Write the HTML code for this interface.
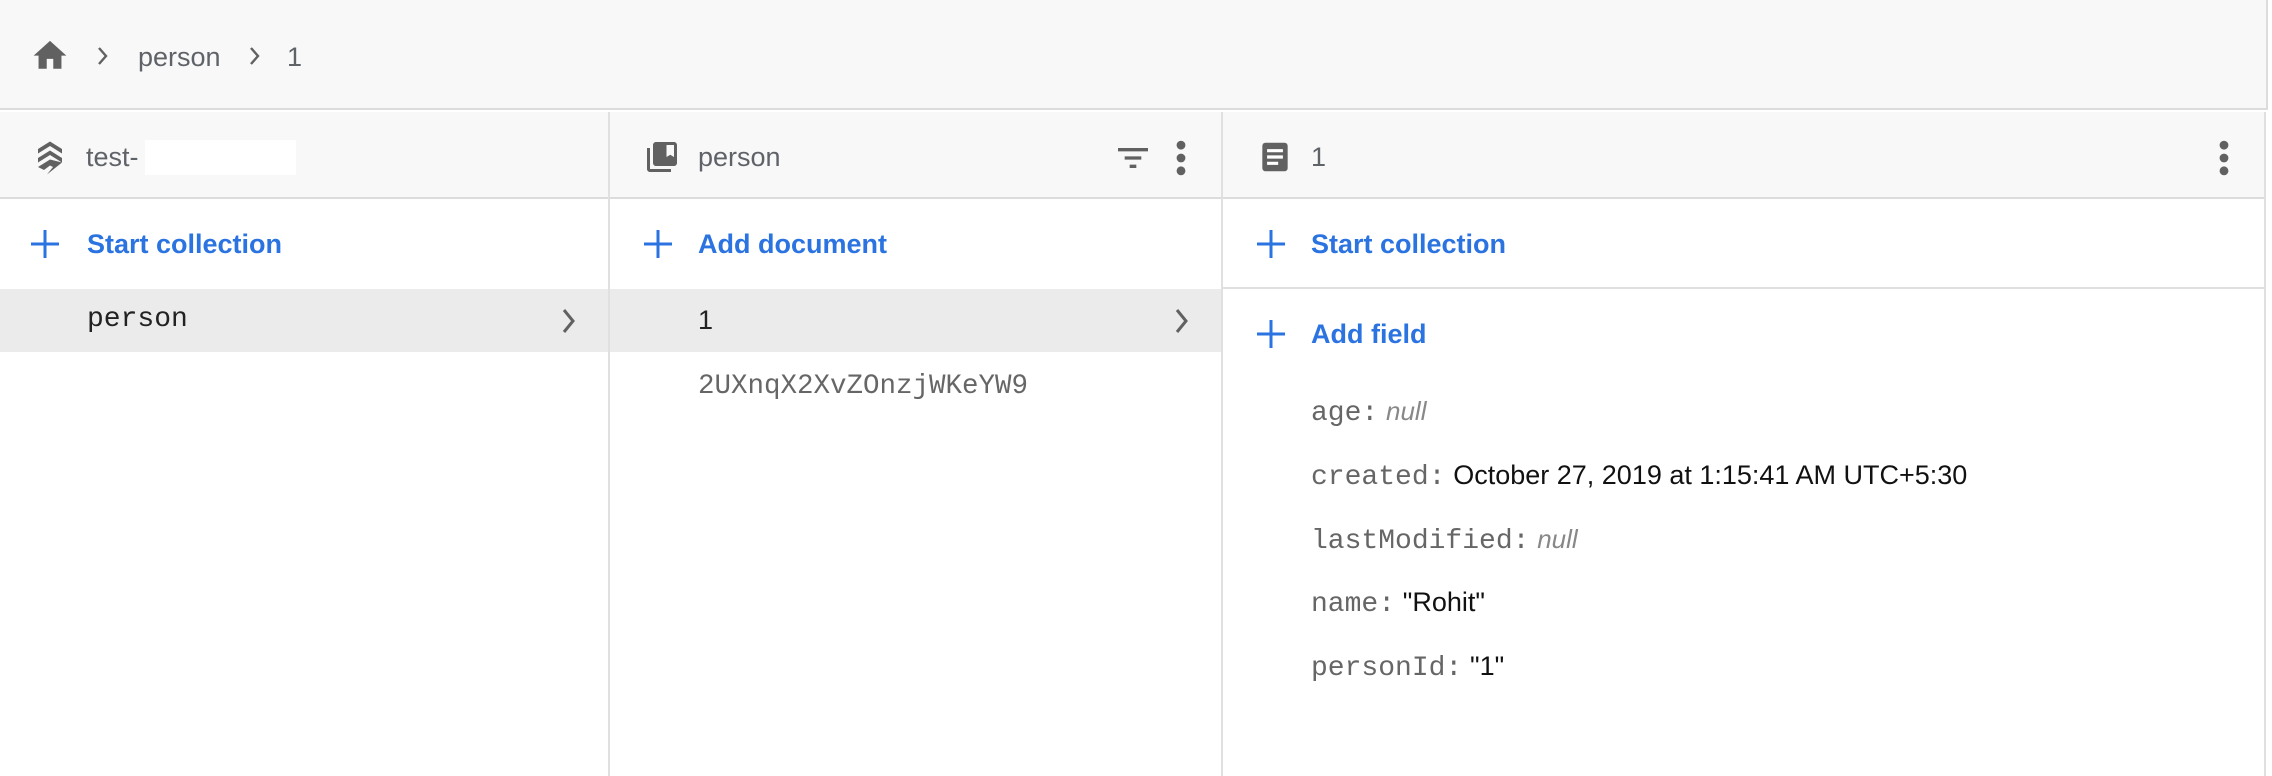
<!DOCTYPE html>
<html><head><meta charset="utf-8"><style>
*{margin:0;padding:0;box-sizing:border-box}
body{width:2272px;height:776px;background:#fff;font-family:"Liberation Sans",sans-serif;position:relative;overflow:hidden}
.a{position:absolute}
.t{position:absolute;white-space:nowrap;line-height:1}
.g{color:#5f6368}
.blue{color:#2a73e0;font-size:27px;font-weight:bold}
.mono{font-family:"Liberation Mono",monospace}
</style></head><body>
<div class="a" style="left:0;top:0;width:2268px;height:110px;background:#f8f8f8;border-bottom:2px solid #dcdcdc;border-right:2px solid #dcdcdc"></div>
<svg class="a" style="left:30px;top:36px" width="40" height="36" viewBox="0 0 24 22"><path d="M10 20v-6h4v6h5v-8h3L12 3 2 12h3v8z" fill="#616161"/></svg>
<svg class="a" style="left:96px;top:46px" width="14" height="20" viewBox="0 0 14 20"><path d="M3 2l7 8-7 8" fill="none" stroke="#616161" stroke-width="2.4"/></svg>
<div class="t g" style="left:138px;top:44px;font-size:27px">person</div>
<svg class="a" style="left:248px;top:46px" width="14" height="20" viewBox="0 0 14 20"><path d="M3 2l7 8-7 8" fill="none" stroke="#616161" stroke-width="2.4"/></svg>
<div class="t g" style="left:287px;top:44px;font-size:27px">1</div>
<div class="a" style="left:0;top:112px;width:2266px;height:87px;background:#f8f8f8;border-bottom:2px solid #dcdcdc"></div>
<div class="a" style="left:608px;top:112px;width:2px;height:664px;background:#e0e0e0"></div>
<div class="a" style="left:1221px;top:112px;width:2px;height:664px;background:#e0e0e0"></div>
<div class="a" style="left:2264px;top:112px;width:2px;height:664px;background:#e0e0e0"></div>
<svg class="a" style="left:32px;top:140px" width="36" height="36" viewBox="0 0 24 24"><path d="M12 1 4 6v3l8-5 8 5V6zM12 7l-8 5v3l8-5 8 5v-3zM12 13l-8 5 4 2 4-3 2 1-4 5 10-8z" fill="#616161"/></svg>
<div class="t g" style="left:86px;top:144px;font-size:27px">test-</div>
<div class="a" style="left:145px;top:140px;width:151px;height:35px;background:#fff"></div>
<svg class="a" style="left:644px;top:139px" width="36" height="36" viewBox="0 0 24 24"><path d="M4 6H2v14c0 1.1.9 2 2 2h14v-2H4V6zm16-4H8c-1.1 0-2 .9-2 2v12c0 1.1.9 2 2 2h12c1.1 0 2-.9 2-2V4c0-1.1-.9-2-2-2zm0 10-2.5-1.5L15 12V4h5v8z" fill="#616161"/></svg>
<div class="t g" style="left:698px;top:144px;font-size:27px">person</div>
<svg class="a" style="left:1113px;top:138px" width="40" height="40" viewBox="0 0 24 24"><path d="M3 6h18v2H3zM7 11h10v2H7zM10 16h4v2h-4z" fill="#616161"/></svg>
<svg class="a" style="left:1169px;top:136px" width="24" height="44" viewBox="0 0 12 24"><circle cx="6" cy="5" r="2.4" fill="#616161"/><circle cx="6" cy="12" r="2.4" fill="#616161"/><circle cx="6" cy="19" r="2.4" fill="#616161"/></svg>
<svg class="a" style="left:1256px;top:138px" width="38" height="38" viewBox="0 0 24 24"><rect x="4" y="3" width="16" height="18" rx="2" fill="#616161"/><path d="M7 7h10v2H7zM7 11h10v2H7zM7 15h7v2H7z" fill="#fff"/></svg>
<div class="t g" style="left:1311px;top:144px;font-size:27px">1</div>
<svg class="a" style="left:2212px;top:136px" width="24" height="44" viewBox="0 0 12 24"><circle cx="6" cy="5" r="2.4" fill="#616161"/><circle cx="6" cy="12" r="2.4" fill="#616161"/><circle cx="6" cy="19" r="2.4" fill="#616161"/></svg>
<svg class="a" style="left:30px;top:229px" width="30" height="30" viewBox="0 0 30 30"><path d="M13.5 1h3v28h-3zM1 13.5h28v3H1z" fill="#2a73e0"/></svg>
<div class="t blue" style="left:87px;top:231px">Start collection</div>
<svg class="a" style="left:643px;top:229px" width="30" height="30" viewBox="0 0 30 30"><path d="M13.5 1h3v28h-3zM1 13.5h28v3H1z" fill="#2a73e0"/></svg>
<div class="t blue" style="left:698px;top:231px">Add document</div>
<svg class="a" style="left:1256px;top:229px" width="30" height="30" viewBox="0 0 30 30"><path d="M13.5 1h3v28h-3zM1 13.5h28v3H1z" fill="#2a73e0"/></svg>
<div class="t blue" style="left:1311px;top:231px">Start collection</div>
<div class="a" style="left:1223px;top:287px;width:1041px;height:2px;background:#e0e0e0"></div>
<div class="a" style="left:0;top:289px;width:608px;height:63px;background:#ebebeb"></div>
<div class="a" style="left:610px;top:289px;width:611px;height:63px;background:#ebebeb"></div>
<div class="t mono" style="left:87px;top:306px;font-size:28px;color:#222">person</div>
<svg class="a" style="left:560px;top:307px" width="18" height="28" viewBox="0 0 18 28"><path d="M4 3l9 11-9 11" fill="none" stroke="#616161" stroke-width="3"/></svg>
<div class="t" style="left:698px;top:307px;font-size:27px;color:#222">1</div>
<svg class="a" style="left:1173px;top:307px" width="18" height="28" viewBox="0 0 18 28"><path d="M4 3l9 11-9 11" fill="none" stroke="#616161" stroke-width="3"/></svg>
<div class="t mono" style="left:698px;top:373px;font-size:27.5px;color:#666">2UXnqX2XvZOnzjWKeYW9</div>
<svg class="a" style="left:1256px;top:319px" width="30" height="30" viewBox="0 0 30 30"><path d="M13.5 1h3v28h-3zM1 13.5h28v3H1z" fill="#2a73e0"/></svg>
<div class="t blue" style="left:1311px;top:321px">Add field</div>
<div class="t" style="left:1311px;top:397px;font-size:28px"><span class="mono" style="color:#666">age:</span> <i style="color:#888;font-size:26px">null</i></div>
<div class="t" style="left:1311px;top:461px;font-size:28px"><span class="mono" style="color:#666">created:</span> <span style="color:#111;font-size:27px">October 27, 2019 at 1:15:41 AM UTC+5:30</span></div>
<div class="t" style="left:1311px;top:525px;font-size:28px"><span class="mono" style="color:#666">lastModified:</span> <i style="color:#888;font-size:26px">null</i></div>
<div class="t" style="left:1311px;top:588px;font-size:28px"><span class="mono" style="color:#666">name:</span> <span style="color:#111;font-size:27px">"Rohit"</span></div>
<div class="t" style="left:1311px;top:652px;font-size:28px"><span class="mono" style="color:#666">personId:</span> <span style="color:#111;font-size:27px">"1"</span></div>
</body></html>
